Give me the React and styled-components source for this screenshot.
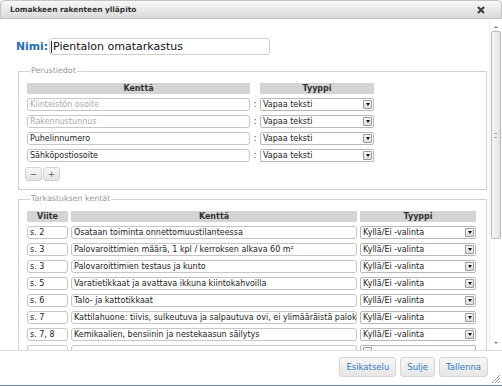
import React from "react";
import styled, { createGlobalStyle } from "styled-components";

const Global = createGlobalStyle`
  html, body { margin: 0; padding: 0; background: #fff; }
  body { font-family: "DejaVu Sans", Verdana, sans-serif; }
  * { box-sizing: border-box; }
`;

const Dialog = styled.div`
  width: 502px;
  height: 386px;
  display: flex;
  flex-direction: column;
  background: #fff;
  border-bottom: 1px solid #6b8499;
  position: relative;
  overflow: hidden;
  font-family: "DejaVu Sans", Verdana, sans-serif;
`;

const TitleBar = styled.div`
  height: 19px;
  flex: none;
  border: 1px solid #c4c4c4;
  border-radius: 4px 4px 0 0;
  background: linear-gradient(#f8f8f8, #d9d9d9);
  display: flex;
  align-items: center;
  justify-content: space-between;
  padding: 0 16px 0 9px;
`;

const Title = styled.span`
  font-size: 7.4px;
  font-weight: bold;
  color: #333;
`;

const Main = styled.div`
  flex: 1;
  min-height: 0;
  display: flex;
  border-bottom: 1px solid #dcdcdc;
`;

const Viewport = styled.div`
  flex: 1;
  overflow: hidden;
  padding: 19px 0 0 16px;
`;

const NimiRow = styled.div`
  display: flex;
  align-items: center;
  gap: 1px;
  height: 17px;
`;

const NimiLabel = styled.span`
  font-size: 10.8px;
  font-weight: bold;
  color: #1e6db6;
`;

const NimiField = styled.div`
  width: 221px;
  height: 17px;
  border: 1px solid #cfcfcf;
  border-radius: 3px;
  display: flex;
  align-items: center;
  padding-left: 1px;
  font-size: 11px;
  color: #111;
`;

const Caret = styled.span`
  width: 1px;
  height: 12px;
  background: #222;
  margin-right: 1px;
`;

const Fieldset = styled.fieldset`
  margin: ${(p) => p.$top}px 0 0 2px;
  width: 469px;
  border: 1px solid #d3d3d3;
  padding: 7px 8px ${(p) => p.$bottom}px 8px;
  min-width: 0;
`;

const Legend = styled.legend`
  font-size: 7.9px;
  line-height: 10px;
  color: #999;
  padding: 0 1px;
  margin-left: 3px;
`;

const Table = styled.div`
  display: grid;
  grid-template-columns: ${(p) => p.$cols};
  column-gap: ${(p) => p.$gap}px;
  row-gap: 4px;
  align-items: center;
`;

const Head = styled.div`
  height: 11px;
  background: #d4d4d4;
  font-size: 8px;
  font-weight: bold;
  color: #333;
  text-align: center;
  line-height: 11px;
`;

const Blank = styled.div``;

const Field = styled.div`
  height: 13px;
  border: 1px solid #c6c6c6;
  border-radius: 3px;
  padding-left: 2px;
  font-size: 8px;
  line-height: 11px;
  color: ${(p) => (p.$muted ? "#a9a9a9" : "#222")};
  white-space: nowrap;
  overflow: hidden;
`;

const Colon = styled.div`
  font-size: 8px;
  color: #333;
  text-align: center;
  line-height: 13px;
`;

const Select = styled.div`
  height: 13px;
  border: 1px solid #b8b8b8;
  border-radius: 2px;
  display: flex;
  align-items: center;
  justify-content: space-between;
  padding: 0 1px 0 2px;
  font-size: 8px;
  color: #222;
  white-space: nowrap;
`;

const Arrow = styled.span`
  width: 9px;
  height: 9px;
  border: 1px solid #9a9a9a;
  border-radius: 1px;
  background: linear-gradient(#f6f6f6, #dedede);
  display: flex;
  align-items: center;
  justify-content: center;
  &::after {
    content: "";
    border-left: 2px solid transparent;
    border-right: 2px solid transparent;
    border-top: 3px solid #111;
  }
`;

const PlusMinus = styled.div`
  display: flex;
  gap: 1px;
  margin: 5px 0 0 -2px;
`;

const SmallBtn = styled.div`
  width: 17px;
  height: 14px;
  border: 1px solid #d2d2d2;
  border-radius: 3px;
  background: linear-gradient(#f7f7f7, #e4e4e4);
  color: #666;
  font-size: 9px;
  line-height: 12px;
  text-align: center;
`;

const Scrollbar = styled.div`
  width: 13px;
  flex: none;
  display: flex;
  flex-direction: column;
  align-items: center;
  padding: 3px 2px 3px 1px;
  border-left: 1px solid #f0f0f0;
`;

const ScrollArrow = styled.div`
  height: 9px;
  width: 9px;
  display: flex;
  align-items: center;
  justify-content: center;
  flex: none;
  &::after {
    content: "";
    border-left: 2px solid transparent;
    border-right: 2px solid transparent;
    ${(p) => (p.$up ? "border-bottom: 2px solid #777;" : "border-top: 2px solid #777;")}
  }
`;

const Thumb = styled.div`
  width: 10px;
  height: 208px;
  flex: none;
  border: 1px solid #b9b9b9;
  border-radius: 2px;
  background: linear-gradient(90deg, #f6f6f6, #e2e2e2);
  display: flex;
  align-items: center;
  justify-content: center;
  &::after {
    content: "";
    width: 3px;
    height: 3px;
    border-top: 1px solid #aaa;
    border-bottom: 1px solid #aaa;
  }
`;

const Track = styled.div`
  flex: 1;
`;

const Footer = styled.div`
  height: 34px;
  flex: none;
  display: flex;
  justify-content: flex-end;
  align-items: flex-start;
  gap: 4px;
  padding: 6px 14px 0 0;
`;

const Button = styled.div`
  height: 20px;
  padding: 0 6px;
  border: 1px solid #d6d6d6;
  border-radius: 3px;
  background: linear-gradient(#f6f6f6, #e6e6e6);
  color: #2f7dc0;
  font-size: 8.5px;
  line-height: 18px;
`;

const Grip = styled.svg`
  position: absolute;
  right: 1px;
  bottom: 1px;
`;

const basics = [
  { name: "Kiinteistön osoite", muted: true },
  { name: "Rakennustunnus", muted: true },
  { name: "Puhelinnumero" },
  { name: "Sähköpostiosoite" },
];

const checks = [
  ["s. 2", "Osataan toiminta onnettomuustilanteessa"],
  ["s. 3", "Palovaroittimien määrä, 1 kpl / kerroksen alkava 60 m²"],
  ["s. 3", "Palovaroittimien testaus ja kunto"],
  ["s. 5", "Varatietikkaat ja avattava ikkuna kiintokahvoilla"],
  ["s. 6", "Talo- ja kattotikkaat"],
  ["s. 7", "Kattilahuone: tiivis, sulkeutuva ja salpautuva ovi, ei ylimääräistä palokuormaa"],
  ["s. 7, 8", "Kemikaalien, bensiinin ja nestekaasun säilytys"],
  ["", ""],
];

export default function App() {
  return (
    <>
      <Global />
      <Dialog>
        <TitleBar>
          <Title>Lomakkeen rakenteen ylläpito</Title>
          <svg width="8" height="8" viewBox="0 0 8 8">
            <path d="M1 1L7 7M7 1L1 7" stroke="#3a3a3a" strokeWidth="2" />
          </svg>
        </TitleBar>
        <Main>
          <Viewport>
            <NimiRow>
              <NimiLabel>Nimi:</NimiLabel>
              <NimiField>
                <Caret />
                Pientalon omatarkastus
              </NimiField>
            </NimiRow>
            <Fieldset $top={11} $bottom={8}>
              <Legend>Perustiedot</Legend>
              <Table $cols="223px 10px 114px" $gap={0}>
                <Head>Kenttä</Head>
                <Blank />
                <Head>Tyyppi</Head>
                {basics.map((b) => (
                  <React.Fragment key={b.name}>
                    <Field $muted={b.muted}>{b.name}</Field>
                    <Colon>:</Colon>
                    <Select>
                      Vapaa teksti
                      <Arrow />
                    </Select>
                  </React.Fragment>
                ))}
              </Table>
              <PlusMinus>
                <SmallBtn>−</SmallBtn>
                <SmallBtn>+</SmallBtn>
              </PlusMinus>
            </Fieldset>
            <Fieldset $top={4} $bottom={8}>
              <Legend>Tarkastuksen kentät</Legend>
              <Table $cols="41px 286px 116px" $gap={3}>
                <Head>Viite</Head>
                <Head>Kenttä</Head>
                <Head>Tyyppi</Head>
                {checks.map(([ref, name], i) => (
                  <React.Fragment key={i}>
                    <Field>{ref}</Field>
                    <Field>{name}</Field>
                    <Select>
                      {ref ? "Kyllä/Ei -valinta" : ""}
                      <Arrow />
                    </Select>
                  </React.Fragment>
                ))}
              </Table>
            </Fieldset>
          </Viewport>
          <Scrollbar>
            <ScrollArrow $up />
            <Thumb />
            <Track />
            <ScrollArrow />
          </Scrollbar>
        </Main>
        <Footer>
          <Button>Esikatselu</Button>
          <Button>Sulje</Button>
          <Button>Tallenna</Button>
        </Footer>
        <Grip width="11" height="11" viewBox="0 0 11 11">
          <path d="M10 2L2 10M10 5L5 10M10 8L8 10" stroke="#999" strokeWidth="1" />
        </Grip>
      </Dialog>
    </>
  );
}
